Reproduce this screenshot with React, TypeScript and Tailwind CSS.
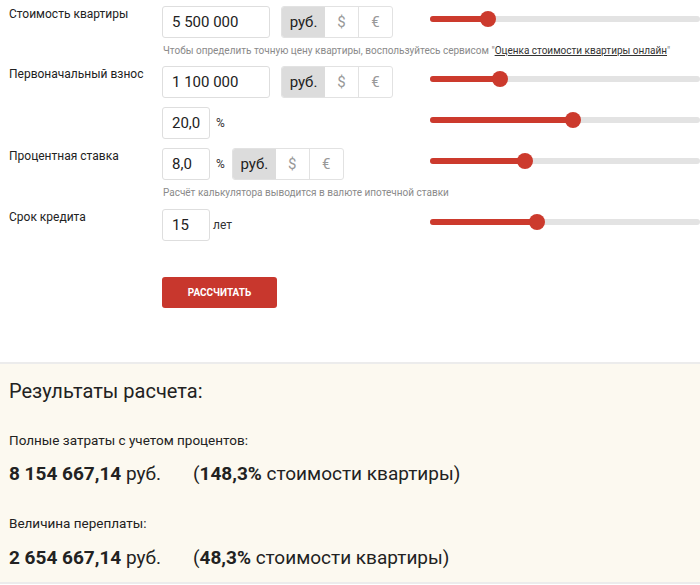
import React from "react";

const font = { fontFamily: 'Roboto, "Noto Sans", sans-serif' };

function Slider({ pos }: { pos: number }) {
  return (
    <div className="relative h-[6px] w-full rounded-full bg-[#e3e3e3]">
      <div className="absolute left-0 top-0 h-[6px] rounded-full bg-[#cc3a2d]" style={{ width: pos }} />
      <div
        className="absolute top-1/2 h-[16px] w-[16px] -translate-x-1/2 -translate-y-1/2 rounded-full bg-[#cc3a2d]"
        style={{ left: pos }}
      />
    </div>
  );
}

function Currency({ className = "" }: { className?: string }) {
  return (
    <div className={`flex h-[32px] overflow-hidden rounded-[3px] border border-[#e2e2e2] text-[15px] ${className}`}>
      <div className="flex w-[43px] items-center justify-center bg-[#dcdcdc] text-[#222]">руб.</div>
      <div className="flex w-[34px] items-center justify-center border-r border-[#e2e2e2] text-[#999]">$</div>
      <div className="flex w-[33px] items-center justify-center text-[#999]">€</div>
    </div>
  );
}

function Field({ value, w }: { value: string; w: string }) {
  return (
    <div className={`flex h-[32px] items-center rounded-[3px] border border-[#dedede] bg-white pl-[9px] text-[15px] text-[#222] ${w}`}>
      {value}
    </div>
  );
}

function Row({
  label,
  children,
  slider,
  mt,
}: {
  label?: string;
  children: React.ReactNode;
  slider: number;
  mt: string;
}) {
  return (
    <div className={`flex items-start ${mt}`}>
      <div className="w-[162px] pl-[9px] pt-[1px] text-[12px] leading-[15px] text-[#222]">{label}</div>
      <div className="flex w-[268px] items-center">{children}</div>
      <div className="flex-1 pt-[10px]">
        <Slider pos={slider} />
      </div>
    </div>
  );
}

export default function App() {
  return (
    <div className="h-[585px] w-[700px] overflow-hidden bg-white" style={font}>
      <div className="pt-[6px]">
        <Row label="Стоимость квартиры" slider={58} mt="">
          <Field value="5 500 000" w="w-[108px]" />
          <Currency className="ml-[11px]" />
        </Row>
        <div className="ml-[163px] mt-[5px] whitespace-nowrap text-[10px] leading-[15px] text-[#8a8a8a]">
          Чтобы определить точную цену квартиры, воспользуйтесь сервисом "
          <span className="text-[#333] underline">Оценка стоимости квартиры онлайн</span>"
        </div>
        <Row label="Первоначальный взнос" slider={70} mt="mt-[8px]">
          <Field value="1 100 000" w="w-[108px]" />
          <Currency className="ml-[11px]" />
        </Row>
        <Row slider={143} mt="mt-[9px]">
          <Field value="20,0" w="w-[48px]" />
          <span className="ml-[6px] text-[12px] text-[#333]">%</span>
        </Row>
        <Row label="Процентная ставка" slider={95} mt="mt-[9px]">
          <Field value="8,0" w="w-[48px]" />
          <span className="ml-[6px] text-[12px] text-[#333]">%</span>
          <Currency className="ml-[7px]" />
        </Row>
        <div className="ml-[163px] mt-[5px] text-[10px] leading-[15px] text-[#8a8a8a]">
          Расчёт калькулятора выводится в валюте ипотечной ставки
        </div>
        <Row label="Срок кредита" slider={107} mt="mt-[9px]">
          <Field value="15" w="w-[48px]" />
          <span className="ml-[3px] text-[12px] text-[#333]">лет</span>
        </Row>
        <div className="ml-[162px] mt-[36px]">
          <button className="h-[31px] w-[115px] rounded-[3px] bg-[#c8372d] text-[10px] font-bold uppercase text-white">
            Рассчитать
          </button>
        </div>
      </div>

      <div className="mt-[54px] border-y-2 border-[#ececec] bg-[#fcf9f0] pb-[10px] pl-[9px] pt-[12px] text-[#222]">
        <div className="text-[20px] leading-[30px]">Результаты расчета:</div>
        <div className="mt-[24px] text-[13.5px] leading-[20px]">Полные затраты с учетом процентов:</div>
        <div className="mt-[10px] flex text-[19px] leading-[28px]">
          <div className="w-[184px]">
            <b>8 154 667,14</b> руб.
          </div>
          <div>
            (<b>148,3%</b> стоимости квартиры)
          </div>
        </div>
        <div className="mt-[25px] text-[13.5px] leading-[20px]">Величина переплаты:</div>
        <div className="mt-[11px] flex text-[19px] leading-[28px]">
          <div className="w-[184px]">
            <b>2 654 667,14</b> руб.
          </div>
          <div>
            (<b>48,3%</b> стоимости квартиры)
          </div>
        </div>
      </div>
    </div>
  );
}
